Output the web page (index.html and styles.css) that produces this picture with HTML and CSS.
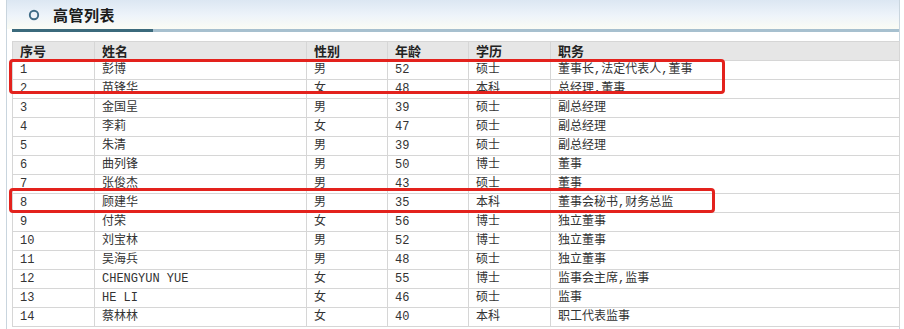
FILE: index.html
```html
<!DOCTYPE html>
<html lang="zh">
<head>
<meta charset="utf-8">
<link rel="stylesheet" href="styles.css">
</head>
<body>
<div class="panel">
  <div class="panel-head">
    <svg class="ring" width="12" height="12" viewBox="0 0 12 12"><circle cx="6" cy="6" r="4.2" fill="none" stroke="#3f6b86" stroke-width="1.9"/></svg>
    <span class="title">高管列表</span>
  </div>
  <div class="bar"><span class="bar-dark"></span></div>
  <table class="grid">
    <colgroup>
      <col class="c1"><col class="c2"><col class="c3"><col class="c4"><col class="c5"><col class="c6">
    </colgroup>
    <thead>
      <tr><th>序号</th><th>姓名</th><th>性别</th><th>年龄</th><th>学历</th><th>职务</th></tr>
    </thead>
    <tbody>
      <tr><td>1</td><td>彭博</td><td>男</td><td>52</td><td>硕士</td><td>董事长,法定代表人,董事</td></tr>
      <tr><td>2</td><td>苗锋华</td><td>女</td><td>48</td><td>本科</td><td>总经理,董事</td></tr>
      <tr><td>3</td><td>金国呈</td><td>男</td><td>39</td><td>硕士</td><td>副总经理</td></tr>
      <tr><td>4</td><td>李莉</td><td>女</td><td>47</td><td>硕士</td><td>副总经理</td></tr>
      <tr><td>5</td><td>朱清</td><td>男</td><td>39</td><td>硕士</td><td>副总经理</td></tr>
      <tr><td>6</td><td>曲列锋</td><td>男</td><td>50</td><td>博士</td><td>董事</td></tr>
      <tr><td>7</td><td>张俊杰</td><td>男</td><td>43</td><td>硕士</td><td>董事</td></tr>
      <tr><td>8</td><td>顾建华</td><td>男</td><td>35</td><td>本科</td><td>董事会秘书,财务总监</td></tr>
      <tr><td>9</td><td>付荣</td><td>女</td><td>56</td><td>博士</td><td>独立董事</td></tr>
      <tr><td>10</td><td>刘宝林</td><td>男</td><td>52</td><td>博士</td><td>独立董事</td></tr>
      <tr><td>11</td><td>吴海兵</td><td>男</td><td>48</td><td>硕士</td><td>独立董事</td></tr>
      <tr><td>12</td><td>CHENGYUN YUE</td><td>女</td><td>55</td><td>博士</td><td>监事会主席,监事</td></tr>
      <tr><td>13</td><td>HE LI</td><td>女</td><td>46</td><td>硕士</td><td>监事</td></tr>
      <tr><td>14</td><td>蔡林林</td><td>女</td><td>40</td><td>本科</td><td>职工代表监事</td></tr>
    </tbody>
  </table>
</div>
<div class="mark mark-a"></div>
<div class="mark mark-b"></div>
</body>
</html>
```
FILE: styles.css
```css
html, body {
  margin: 0;
  padding: 0;
  background: #ffffff;
}
body {
  position: relative;
  width: 904px;
  height: 329px;
  overflow: hidden;
  font-family: "Noto Sans CJK SC", "DejaVu Sans", sans-serif;
}
.panel {
  margin-left: 6px;
  width: 892px;
  height: 329px;
  border-left: 1px solid #c9d5de;
  border-right: 1px solid #c9d5de;
}
.panel-head {
  height: 29px;
  display: flex;
  align-items: center;
  background: linear-gradient(to bottom, #dce7f2 0%, #eef4fa 55%, #fbfcf4 100%);
  padding-left: 21px;
}
.ring {
  display: block;
}
.title {
  margin-left: 13px;
  font-size: 15px;
  font-weight: bold;
  color: #1b1b1b;
  line-height: 29px;
  letter-spacing: 0.5px;
}
.bar {
  margin: 0 0 0 5px;
  height: 3px;
  background: #a7c0cf;
  display: flex;
}
.bar-dark {
  width: 141px;
  background: #3b6a7c;
}
.grid {
  margin: 9px 0 0 5px;
  width: 887px;
  border-collapse: collapse;
  table-layout: fixed;
  font-size: 12px;
  color: #333333;
}
.c1 { width: 82px; }
.c2 { width: 212px; }
.c3 { width: 81px; }
.c4 { width: 81px; }
.c5 { width: 82px; }
.c6 { width: 349px; }
.grid th, .grid td {
  border: 1px solid #d6d6d6;
  height: 18px;
  padding: 0 0 0 7px;
  text-align: left;
  line-height: 18px;
  white-space: nowrap;
}
.grid td {
  font-family: "Liberation Mono", "Noto Sans CJK SC", monospace;
}
.grid th {
  background: #e6e6e6;
  font-size: 13px;
  font-weight: bold;
  color: #222;
}
.mark {
  position: absolute;
  border: 3px solid #e3221d;
  border-radius: 4px;
  box-sizing: border-box;
}
.mark-a {
  left: 9px;
  top: 59px;
  width: 716px;
  height: 35px;
}
.mark-b {
  left: 9px;
  top: 188px;
  width: 706px;
  height: 25px;
}
```
